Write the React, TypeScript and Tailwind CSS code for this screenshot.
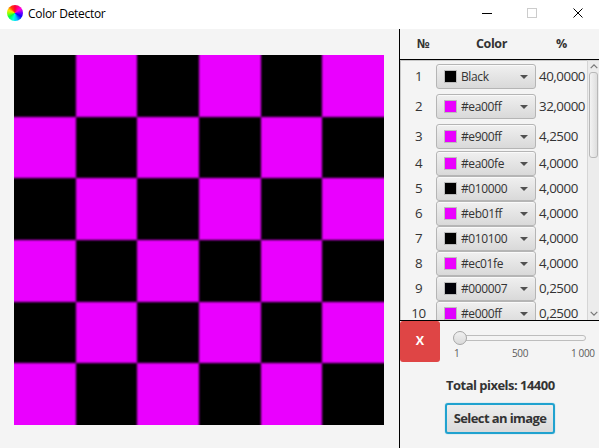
type Entry = { id: number; name: string; color: string; pct: string; tall?: boolean };

const entries: Entry[] = [
  { id: 1, name: "Black", color: "#000000", pct: "40,0000", tall: true },
  { id: 2, name: "#ea00ff", color: "#ea00ff", pct: "32,0000", tall: true },
  { id: 3, name: "#e900ff", color: "#e900ff", pct: "4,2500", tall: true },
  { id: 4, name: "#ea00fe", color: "#ea00fe", pct: "4,0000" },
  { id: 5, name: "#010000", color: "#010000", pct: "4,0000" },
  { id: 6, name: "#eb01ff", color: "#eb01ff", pct: "4,0000" },
  { id: 7, name: "#010100", color: "#010100", pct: "4,0000" },
  { id: 8, name: "#ec01fe", color: "#ec01fe", pct: "4,0000" },
  { id: 9, name: "#000007", color: "#000007", pct: "0,2500" },
  { id: 10, name: "#e000ff", color: "#e000ff", pct: "0,2500" },
];

function TitleBar() {
  return (
    <header className="flex h-[29px] shrink-0 items-start bg-white text-black">
      <div className="mt-[5px] ml-[7px] size-4 rounded-full bg-[conic-gradient(#ff0030,#ff00e0_55deg,#8000ff_85deg,#1000ff_120deg,#00c0ff_165deg,#00ffe0_195deg,#00ff40_235deg,#a0ff00_270deg,#ffe000_295deg,#ff4000_325deg,#ff0030)]" />
      <span className="mt-[5px] ml-[5px] text-[12px] leading-[17px] tracking-[-0.3px]">Color Detector</span>
      <svg className="ml-auto" width="119" height="29" fill="none" shapeRendering="crispEdges">
        <path d="M2 13.5h10" stroke="#000" />
        <rect x="47.5" y="8.5" width="9" height="9" stroke="#ccc" />
        <path d="M93.5 8.5l9 9M102.5 8.5l-9 9" stroke="#000" shapeRendering="auto" />
      </svg>
    </header>
  );
}

const clamp = (n: number) => Math.min(6, Math.max(1, n));

/* An extra ring repeats the outermost squares so the softening never reaches the frame's edge. */
function Checkerboard() {
  return (
    <div className="size-[370px] overflow-hidden bg-black">
      <div className="-mt-[61.667px] -ml-[61.667px] grid size-[493.333px] grid-cols-8 grid-rows-8 bg-black blur-[0.9px]">
        {Array.from({ length: 64 }, (_, i) => (
          <div
            key={i}
            className={(clamp(Math.floor(i / 8)) + clamp(i % 8)) % 2 ? "bg-[#ea00ff]" : "bg-black"}
          />
        ))}
      </div>
    </div>
  );
}

function ColorRow({ entry }: { entry: Entry }) {
  return (
    <div className={`flex shrink-0 items-center ${entry.tall ? "h-[30px] pt-[2px] pb-[3px]" : "h-[25px]"}`}>
      <span className="w-[35px] text-center text-[13.33px] tracking-[-0.4px]">{entry.id}</span>
      <div className="flex h-[25px] w-[100px] items-center rounded-[3px] border border-[#b5b5b5] bg-linear-to-b from-[#f0f0f0] to-[#d9d9d9] pr-[7px] pl-[7px] shadow-[inset_0_1px_0_#fafafa]">
        <span className="size-[13px] shrink-0 border border-[#bcbcbc]" style={{ backgroundColor: entry.color }} />
        <span className="ml-[4px] text-[12px] leading-none tracking-[-0.38px]">{entry.name}</span>
        <svg className="ml-auto" width="8" height="4">
          <path d="M0 0h8L4 4z" fill="#505050" />
        </svg>
      </div>
      <span className="ml-[3px] text-[13.33px] tracking-[-0.46px]">{entry.pct}</span>
    </div>
  );
}

function Results() {
  return (
    <div className="flex h-[261px] shrink-0 overflow-hidden border-b border-black">
      <div className="flex w-[187px] shrink-0 flex-col overflow-hidden border-t border-l border-[#c8c8c8] pt-px">
        {entries.map((entry, i) => (
          <div key={entry.id} className={i === 3 ? "-mt-px shrink-0" : "shrink-0"}>
            <ColorRow entry={entry} />
          </div>
        ))}
      </div>
      <div className="flex w-3 shrink-0 flex-col items-center border-t border-l border-[#d5d5d5] bg-[#ececec]">
        <svg className="mt-[3px] shrink-0" width="8" height="5" fill="none">
          <path d="M.7 4.2L4 .9l3.3 3.3" stroke="#777" strokeWidth="1.2" />
        </svg>
        <div className="mt-[3px] h-[86px] w-[9px] shrink-0 rounded-[3px] border border-[#b8b8b8] bg-linear-to-r from-[#f3f3f3] to-[#dedede]" />
        <svg className="mt-auto mb-[4px] shrink-0" width="8" height="5" fill="none">
          <path d="M.7.8L4 4.1 7.3.8" stroke="#777" strokeWidth="1.2" />
        </svg>
      </div>
    </div>
  );
}

function Controls() {
  return (
    <div className="flex flex-1 flex-col">
      <div className="flex h-[41px]">
        <button className="h-[41px] w-10 rounded-[3px] bg-[#df4545] text-[12.5px] font-bold text-white">X</button>
        <div className="ml-[13px] w-[144px] text-[10px] tracking-[-0.35px] text-[#5b5b5b]">
          <div className="mt-[10px] flex h-[14px] items-center">
            <div className="z-10 size-[14px] shrink-0 rounded-full border border-[#a6a6a6] bg-linear-to-b from-[#f0f0f0] to-[#dadada]" />
            <div className="-ml-2 h-[6px] w-[127px] rounded-full border border-[#bdbdbd] bg-[#f4f4f4]" />
          </div>
          <div className="mt-px flex h-[14px] leading-[14px]">
            <span className="ml-[1px] w-[20px]">1</span>
            <span className="ml-[38px] w-[32px]">500</span>
            <span className="ml-[27px] whitespace-nowrap">1 000</span>
          </div>
        </div>
      </div>
      <div className="mt-[14px] ml-[46px] text-[13px] leading-[18px] font-bold tracking-[-0.52px]">Total pixels: 14400</div>
      <button className="mt-[9px] ml-[45px] h-[31px] w-[110px] rounded-[3px] border-2 border-[#20a2cf] bg-linear-to-b from-[#eeeeee] to-[#dadada] pt-px text-[13px] font-bold tracking-[-0.6px] whitespace-nowrap shadow-[0_0_1px_#39aed5]">
        Select an image
      </button>
    </div>
  );
}

export default function App() {
  return (
    <div className="flex h-[448px] w-[599px] flex-col overflow-hidden bg-[#f4f4f4] font-['Open_Sans','Noto_Sans',sans-serif] text-[#333333]">
      <TitleBar />
      <div className="flex flex-1">
        <main className="w-[399px] shrink-0 pt-[26px] pl-[14px]">
          <Checkerboard />
        </main>
        <aside className="flex w-[200px] shrink-0 flex-col border-l border-black">
          <div className="flex h-[31px] shrink-0 items-center border-b border-black pt-px text-[12.5px] font-bold tracking-[-0.4px]">
            <span className="w-[46px] text-center">№</span>
            <span className="w-[91px] text-center">Color</span>
            <span className="w-[49px] text-center">%</span>
          </div>
          <Results />
          <Controls />
        </aside>
      </div>
    </div>
  );
}
